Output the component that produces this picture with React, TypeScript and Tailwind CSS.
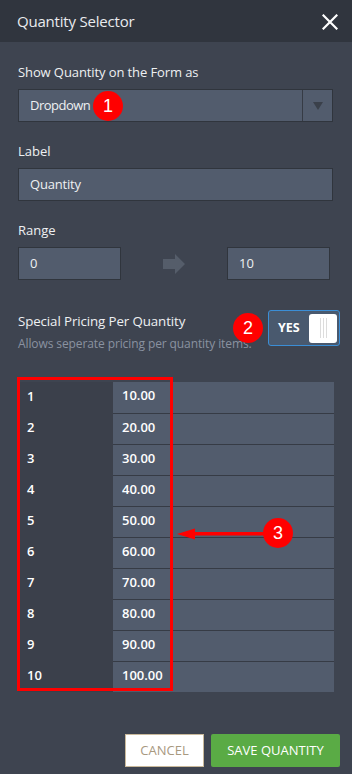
import React from "react";

const rows = [1, 2, 3, 4, 5, 6, 7, 8, 9, 10];

function Badge({ n, className }: { n: string; className: string }) {
  return (
    <div
      className={`absolute w-[30px] h-[30px] rounded-full bg-[#ff0000] text-white flex items-center justify-center text-[18px] leading-none ${className}`}
      style={{ fontFamily: "'Liberation Sans', Arial, sans-serif" }}
    >
      {n}
    </div>
  );
}

export default function App() {
  return (
    <div
      className="relative w-[352px] h-[774px] bg-[#3e4450] text-[#eef0f2] overflow-hidden"
      style={{ fontFamily: "'Open Sans', 'Noto Sans', sans-serif" }}
    >
      {/* Header */}
      <div className="h-[42px] bg-[#30353e] flex items-center justify-between pl-[17px] pr-[14px]">
        <span className="text-[15px] text-[#e9ebee] tracking-[-0.2px]">Quantity Selector</span>
        <svg width="16" height="16" viewBox="0 0 16 16" className="mt-[1px]">
          <path d="M1.5 1.5 L14.5 14.5 M14.5 1.5 L1.5 14.5" stroke="#ffffff" strokeWidth="2.2" strokeLinecap="square" />
        </svg>
      </div>

      <div className="px-[18px] pt-[21px]">
        {/* Show quantity */}
        <div className="text-[13px] leading-[18px] tracking-[-0.1px]">Show Quantity on the Form as</div>
        <div className="mt-[8px] h-[33px] w-[315px] bg-[#525c6d] border border-[#30353d] flex items-stretch">
          <div className="flex-1 flex items-center pl-[11px] text-[13px] tracking-[-0.5px]">Dropdown</div>
          <div className="w-[30px] border-l border-[#363b45] flex items-center justify-center">
            <svg width="10" height="8" viewBox="0 0 10 8">
              <path d="M0 0 H10 L5 8 Z" fill="#3a404a" />
            </svg>
          </div>
        </div>

        {/* Label */}
        <div className="mt-[20px] text-[13px] leading-[18px]">Label</div>
        <div className="mt-[8px] h-[33px] w-[315px] bg-[#525c6d] border border-[#30353d] flex items-center pl-[11px] text-[13px] tracking-[-0.2px]">
          Quantity
        </div>

        {/* Range */}
        <div className="mt-[20px] text-[13px] leading-[18px]">Range</div>
        <div className="mt-[8px] flex items-center">
          <div className="h-[33px] w-[103px] bg-[#525c6d] border border-[#30353d] flex items-center pl-[11px] text-[13px]">0</div>
          <div className="w-[106px] flex justify-center">
            <svg width="22" height="20" viewBox="0 0 22 20">
              <path d="M0 5 H12 V0 L22 10 L12 20 V15 H0 Z" fill="#555d6a" />
            </svg>
          </div>
          <div className="h-[33px] w-[103px] bg-[#525c6d] border border-[#30353d] flex items-center pl-[11px] text-[13px]">10</div>
        </div>

        {/* Special pricing */}
        <div className="mt-[30px] flex items-start justify-between">
          <div className="pt-[2px]">
            <div className="text-[13.3px] leading-[18px] tracking-[-0.1px]">Special Pricing Per Quantity</div>
            <div className="mt-[5px] text-[12px] leading-[17px] text-[#8a92a0] tracking-[-0.1px] whitespace-nowrap">
              Allows seperate pricing per quantity items.
            </div>
          </div>
          <div className="mr-[-6px] shrink-0 w-[72px] h-[36px] rounded-[3px] border-[1.5px] border-[#3b8ed6] bg-[#49596e] flex items-center justify-between pl-[9px] pr-[2px]">
            <span className="text-[12.5px] font-bold text-white">YES</span>
            <div className="w-[28px] h-[29px] rounded-[3px] bg-white flex items-center justify-center gap-[2px]">
              <div className="w-[1px] h-[20px] bg-[#dcdcdc]" />
              <div className="w-[1px] h-[20px] bg-[#dcdcdc]" />
              <div className="w-[1px] h-[20px] bg-[#dcdcdc]" />
            </div>
          </div>
        </div>

        {/* Table */}
        <div className="mt-[30px] w-[316px]">
          {rows.map((r, i) => (
            <div key={r} className="flex h-[31px] text-[13px] font-semibold">
              <div className="w-[95px] bg-[#3b404b] flex items-center pl-[9px] pb-[2px] text-white">{r}</div>
              <div
                className={`flex-1 flex bg-[#525c6d] ${i > 0 ? "border-t border-[#363b45]" : ""}`}
              >
                <div className="w-[60px] flex items-center pl-[9px] pb-[3px] text-white">{(r * 10).toFixed(2)}</div>
                <div className="flex-1" />
              </div>
            </div>
          ))}
        </div>

        {/* Buttons */}
        <div className="mt-[42px] flex justify-end gap-[7px] mr-[-6px]">
          <div className="w-[79px] h-[33px] bg-white border border-[#c9b99b] flex items-center justify-center text-[13px] text-[#a8997f]">
            CANCEL
          </div>
          <div className="w-[129px] h-[33px] bg-[#5aab45] rounded-[2px] flex items-center justify-center text-[13px] text-white">
            SAVE QUANTITY
          </div>
        </div>
      </div>

      {/* Annotations */}
      <Badge n="1" className="left-[93px] top-[91px]" />
      <Badge n="2" className="left-[233px] top-[313px]" />
      <div className="absolute left-[17px] top-[377px] w-[156px] h-[314px] border-[3px] border-[#ff0000]" />
      <svg className="absolute left-[170px] top-[524px]" width="100" height="20" viewBox="0 0 100 20">
        <path d="M7 10 L25 4.5 L25 15.5 Z" fill="#ff0000" />
        <rect x="24" y="8" width="72" height="3.5" fill="#ff0000" />
      </svg>
      <Badge n="3" className="left-[263px] top-[518px]" />
    </div>
  );
}
